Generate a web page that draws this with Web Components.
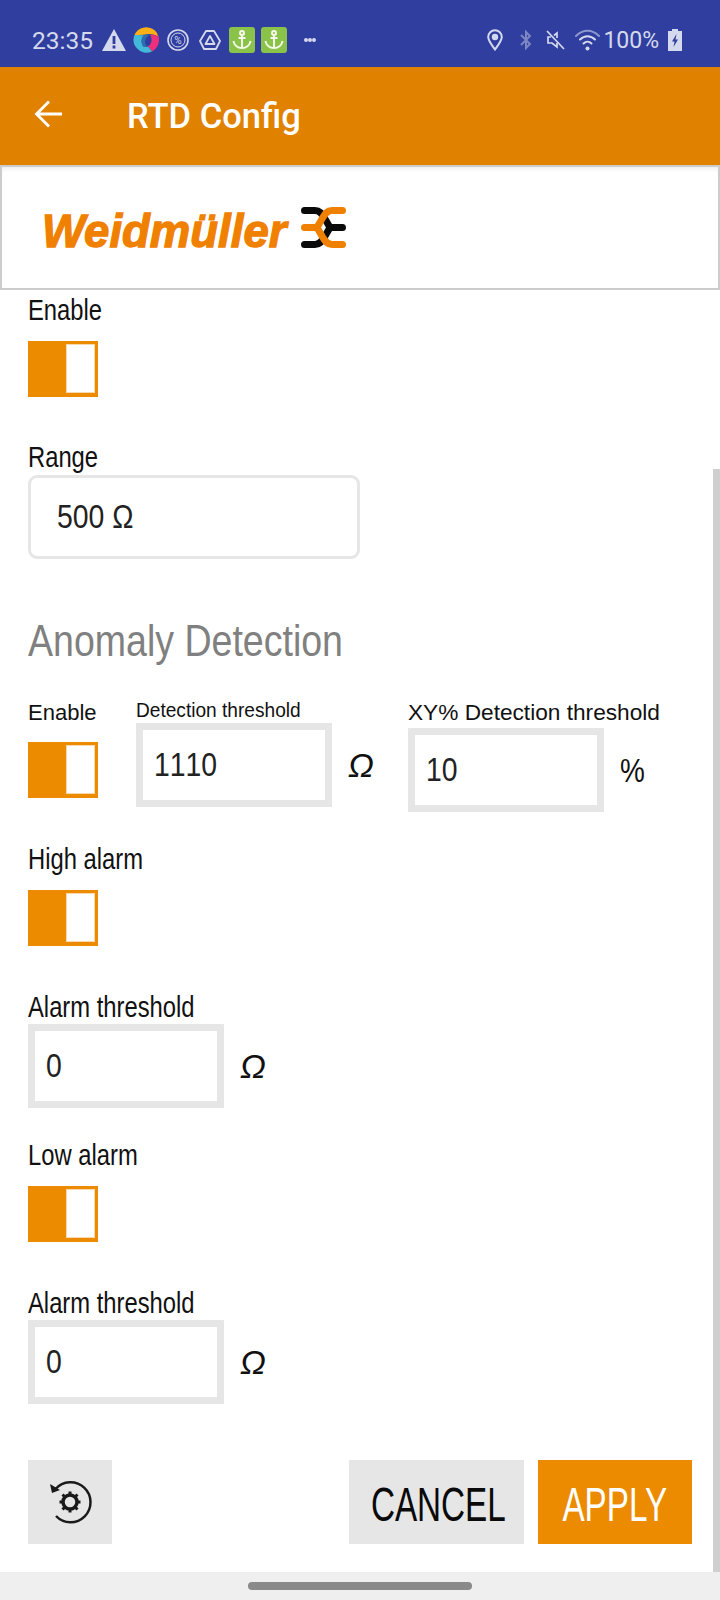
<!DOCTYPE html>
<html>
<head>
<meta charset="utf-8">
<title>RTD Config</title>
<style>
  html, body { margin: 0; padding: 0; background: #fff; }
  body { width: 720px; height: 1600px; overflow: hidden; font-family: "Liberation Sans", sans-serif; }
</style>
</head>
<body>
<rtd-screen></rtd-screen>
<script>
class StatusBar extends HTMLElement {
  connectedCallback() {
    this.attachShadow({ mode: 'open' }).innerHTML = `
<style>
  :host { display: flex; align-items: center; height: 67px; padding: 13px 38px 0 32px; box-sizing: border-box; background: #303f9f; color: #d5d9ed; font-family: Roboto, sans-serif; }
  .time { font-size: 24.5px; margin-right: 9px; }
  .pct { font-size: 23px; margin: 0 9px 0 3px; }
  svg { display: block; flex: none; }
  .grow { flex: 1; }
</style>
<span class="time">23:35</span>
<svg width="24" height="22" viewBox="0 0 24 22"><path d="M12 0 24 22H0Z" fill="#d5d9ed"/><path d="M10.600 7h2.800v8h-2.800zM10.600 16.500h2.800v3h-2.800z" fill="#303f9f"/></svg>
<svg style="margin-left:7px" width="26" height="26" viewBox="0 0 26 26">
  <path d="M2.500 6A13 13 0 0 1 24 6L25.500 10C21 7 17 6.500 13 7.500 9 8 5 8 1.500 8Z" fill="#fbb016"/>
  <path d="M24 6A13 13 0 0 1 19 24.500L15 19.500C19 17 19.500 12 17 7.500 20 7.500 22 8 25 10Z" fill="#ee2f7b"/>
  <path d="M1.500 8C5 8 8 8.500 11 8 8 11 7.500 17 11 20L15 19.500 19 24.500A13 13 0 0 1 1.500 8Z" fill="#42b9d8"/>
  <path d="M11 8C13 7.500 15 7.500 17 7.500 14 9 12 12 12 15 12 17 13 19 15 19.500L11 20C7.500 17 8 11 11 8Z" fill="#2c6fb0"/>
</svg>
<svg style="margin-left:8px" width="22" height="22" viewBox="0 0 22 22" fill="none" stroke="#d5d9ed"><circle cx="11" cy="11" r="10" stroke-width="1.600"/><circle cx="11" cy="11" r="7" stroke-width="1"/><text x="11" y="15" font-size="10" font-family="Roboto" text-anchor="middle" fill="#d5d9ed" stroke="none">%</text></svg>
<svg style="margin-left:10px" width="22" height="20" viewBox="0 0 22 20" fill="none" stroke="#d5d9ed" stroke-width="1.800" stroke-linejoin="round"><path d="M7 1H15L21 11 17 19H5L1 11Z"/><path d="M11 6 15.500 14H6.500Z"/></svg>
<anchor-icon style="margin-left:8px"></anchor-icon>
<anchor-icon style="margin-left:6px"></anchor-icon>
<svg style="margin-left:17px" width="12" height="6" viewBox="0 0 12 6" fill="#d5d9ed"><circle cx="2" cy="3" r="2"/><circle cx="6" cy="3" r="2"/><circle cx="10" cy="3" r="2"/></svg>
<span class="grow"></span>
<svg width="16" height="22" viewBox="0 0 16 22" fill="none" stroke="#d5d9ed" stroke-width="2"><path d="M8 20.500C4 15 1.200 11.500 1.200 8A6.800 6.800 0 0 1 14.800 8C14.800 11.500 12 15 8 20.500Z"/><circle cx="8" cy="8" r="2.200" fill="#d5d9ed"/></svg>
<svg style="margin-left:17px" width="12" height="20" viewBox="0 0 12 20" fill="none" stroke="#7c87c4" stroke-width="2"><path d="M1 5 10 14 6 18V2L10 6 1 15"/></svg>
<svg style="margin-left:14px" width="19" height="20" viewBox="0 0 19 20" fill="none" stroke="#d5d9ed" stroke-width="1.700"><path d="M1 1 18 19"/><path d="M5 7H2V13H6L11 17V13M11 8V3L8 5.500"/></svg>
<svg style="margin-left:10px" width="25" height="22" viewBox="0 0 25 22" fill="none" stroke-linecap="round"><path d="M1 7C8 0 17 0 24 7" stroke="#8d97cf" stroke-width="2"/><path d="M5 10.500C9.500 6 15.500 6 20 10.500" stroke="#d5d9ed" stroke-width="2"/><path d="M8.500 14.500C11 12 14 12 16.500 14.500" stroke="#d5d9ed" stroke-width="2"/><circle cx="12.500" cy="19.500" r="2" fill="#d5d9ed"/></svg>
<span class="pct">100%</span>
<svg width="14" height="22" viewBox="0 0 14 22"><path d="M4 0H10V2H14V22H0V2H4Z" fill="#d5d9ed"/><path d="M8.500 5 4 12.500H6.500L5.500 18 10 10.500H7.500Z" fill="#303f9f"/></svg>
`;
  }
}

class AnchorIcon extends HTMLElement {
  connectedCallback() {
    this.attachShadow({ mode: 'open' }).innerHTML = `
<style>
  :host { display: block; flex: none; width: 26px; height: 26px; border-radius: 3px; background: #8bc34a; }
  svg { display: block; }
</style>
<svg width="26" height="26" viewBox="0 0 26 26" fill="none" stroke="#f4f9ea" stroke-width="2"><circle cx="13" cy="6" r="2"/><path d="M13 8V21M9.500 11H16.500M4.500 14C5 18.500 9 21 13 21S21 18.500 21.500 14"/></svg>
`;
  }
}

class AppBar extends HTMLElement {
  connectedCallback() {
    this.attachShadow({ mode: 'open' }).innerHTML = `
<style>
  :host { display: flex; align-items: center; height: 98px; box-sizing: border-box; padding-left: 34px; background: #e18100; color: #fff; font-family: Roboto, sans-serif; }
  svg { display: block; margin: -4px 64px 0 0; }
  .title { font-size: 34.500px; font-weight: 500; }
</style>
<svg width="29" height="28" viewBox="0 0 29 28" fill="none" stroke="#fff" stroke-width="2.800"><path d="M28 14H2M15 1.500 2.500 14 15 26.500"/></svg>
<span class="title"><slot></slot></span>
`;
  }
}

class LogoPanel extends HTMLElement {
  connectedCallback() {
    this.attachShadow({ mode: 'open' }).innerHTML = `
<style>
  :host { display: flex; align-items: center; height: 125px; box-sizing: border-box; padding-left: 40px; border: 2px solid #cccccc; background: #fff; box-shadow: inset 0 5px 5px -3px #eeeeee; }
  .name { font-style: italic; font-weight: 700; font-size: 45.500px; color: #f08000; -webkit-text-stroke: 1.300px #f08000; line-height: 50px; margin-top: 8px; font-family: "Liberation Sans", sans-serif; }
  svg { display: block; margin-left: 15px; }
</style>
<span class="name">Weidmüller</span>
<svg width="45" height="41" viewBox="0 0 45 41" fill="none" stroke-width="7" stroke-linecap="round">
  <path d="M3.500 3.500H14C19 3.500 21 7 23.500 11L29 20.500H41.500" stroke="#0a0a0a"/>
  <path d="M3.500 37.500H14C19 37.500 21 34 23.500 30L29 20.500" stroke="#0a0a0a"/>
  <path d="M41.500 3.500H31C26 3.500 24 7 21.500 11L16 20.500H3.500" stroke="#f08000"/>
  <path d="M41.500 37.500H31C26 37.500 24 34 21.500 30L16 20.500" stroke="#f08000"/>
</svg>
`;
  }
}

// the reference font is a condensed grotesque, none is installed, so squeeze the text
class FieldLabel extends HTMLElement {
  connectedCallback() {
    const size = this.getAttribute('size') || '29';
    const squeeze = this.getAttribute('squeeze') || '.82';
    const line = this.getAttribute('line') || '34';
    this.attachShadow({ mode: 'open' }).innerHTML = `
<style>
  :host { display: block; font-size: ${size}px; line-height: ${line}px; color: #111; white-space: nowrap; transform: scaleX(${squeeze}); transform-origin: 0 50%; font-family: "Liberation Sans", sans-serif; }
</style>
<slot></slot>
`;
  }
}

class ToggleBox extends HTMLElement {
  connectedCallback() {
    this.attachShadow({ mode: 'open' }).innerHTML = `
<style>
  :host { display: flex; justify-content: flex-end; width: 70px; height: 56px; box-sizing: border-box; padding: 3px 3px 4px 0; background: #ec8b00; }
  .knob { width: 29px; background: #fff; box-shadow: inset 0 0 0 1px #f8d8ad; }
</style>
<div class="knob"></div>
`;
  }
}

class ValueBox extends HTMLElement {
  connectedCallback() {
    const rounded = this.hasAttribute('rounded');
    this.attachShadow({ mode: 'open' }).innerHTML = `
<style>
  :host { display: flex; align-items: center; height: 84px; width: 196px; box-sizing: border-box; border: ${rounded ? '3px' : '7px'} solid #e6e6e6; border-radius: ${rounded ? '9px' : '0'}; padding-left: ${rounded ? '26px' : '11px'}; background: #fff; color: #222; font-family: "Liberation Sans", sans-serif; font-size: 33px; font-kerning: none; }
  .txt { transform: scaleX(.86); transform-origin: 0 50%; white-space: nowrap; }
</style>
<span class="txt"><slot></slot></span>
`;
  }
}

class UnitMark extends HTMLElement {
  connectedCallback() {
    this.attachShadow({ mode: 'open' }).innerHTML = `
<style>
  :host { display: block; width: 30px; font-family: "Liberation Sans", sans-serif; font-size: 34px; color: #111; }
</style>
<slot></slot>
`;
  }
}

class ActionBtn extends HTMLElement {
  connectedCallback() {
    const primary = this.hasAttribute('primary');
    this.attachShadow({ mode: 'open' }).innerHTML = `
<style>
  :host { display: flex; align-items: center; justify-content: center; height: 84px; background: ${primary ? '#ec8b00' : '#e6e6e6'}; color: ${primary ? '#fff' : '#0a0a0a'}; font-family: "Liberation Sans", sans-serif; font-size: 47.500px; }
  .txt { display: block; padding-top: 5px; transform: scaleX(.7); }
  :host([icon]) .txt { padding: 0; transform: none; }
</style>
<span class="txt"><slot></slot></span>
`;
  }
}

class RtdScreen extends HTMLElement {
  connectedCallback() {
    this.attachShadow({ mode: 'open' }).innerHTML = `
<style>
  :host { display: block; position: relative; width: 720px; height: 1600px; overflow: hidden; background: #fff; }
  main { display: flex; flex-direction: column; align-items: flex-start; padding: 3px 0 0 28px; height: 1282px; box-sizing: border-box; }
  .heading { font-family: "Liberation Sans", sans-serif; font-size: 45px; line-height: 54px; color: #808080; margin-top: 55px; transform: scaleX(.834); transform-origin: 0 50%; white-space: nowrap; }
  .gap14 { margin-top: 14px; }
  .gap43 { margin-top: 43px; }
  .gap1 { margin-top: 1px; }
  .gap30 { margin-top: 30px; }
  .gap44 { margin-top: 44px; }
  .wide { width: 332px; }
  .anomaly { display: flex; align-items: flex-start; margin-top: 29px; height: 115px; }
  .col { display: flex; flex-direction: column; }
  .withunit { display: flex; align-items: center; }
  .withunit unit-mark { margin-left: 16px; }
  .pct { display: inline-block; transform: scaleX(.82); transform-origin: 0 50%; }
  .col1 { width: 108px; padding-top: 3px; }
  .col1 toggle-box { margin-top: 16px; }
  .col2 { width: 272px; }
  .col3 { padding-top: 3px; }
  .col3 .withunit { margin-top: 2px; }
  .actions { display: flex; width: 664px; margin-top: 56px; }
  .reset { width: 84px; }
  .reset svg { display: block; }
  .cancel { width: 175px; margin-left: auto; padding-left: 3px; box-sizing: border-box; }
  .apply { width: 154px; margin-left: 14px; }
  .scroll { position: absolute; right: 0; top: 469px; bottom: 28px; width: 7px; background: #cfcfcf; }
  footer { display: flex; align-items: center; justify-content: center; height: 28px; background: #efefef; }
  .pill { width: 224px; height: 8px; border-radius: 4px; background: #8a8a8a; }
</style>
<status-bar></status-bar>
<app-bar>RTD Config</app-bar>
<logo-panel></logo-panel>
<main>
  <field-label>Enable</field-label>
  <toggle-box class="gap14"></toggle-box>
  <field-label class="gap43">Range</field-label>
  <value-box class="gap1 wide" rounded>500 Ω</value-box>
  <div class="heading">Anomaly Detection</div>
  <div class="anomaly">
    <div class="col col1">
      <field-label size="22" line="26" squeeze="1">Enable</field-label>
      <toggle-box></toggle-box>
    </div>
    <div class="col col2">
      <field-label size="21" line="26" squeeze=".91">Detection threshold</field-label>
      <div class="withunit"><value-box>1110</value-box><unit-mark><i>Ω</i></unit-mark></div>
    </div>
    <div class="col col3">
      <field-label size="22" line="26" squeeze="1.03">XY% Detection threshold</field-label>
      <div class="withunit"><value-box>10</value-box><unit-mark><span class="pct">%</span></unit-mark></div>
    </div>
  </div>
  <field-label class="gap30">High alarm</field-label>
  <toggle-box class="gap14"></toggle-box>
  <field-label class="gap44">Alarm threshold</field-label>
  <div class="withunit"><value-box>0</value-box><unit-mark><i>Ω</i></unit-mark></div>
  <field-label class="gap30">Low alarm</field-label>
  <toggle-box class="gap14"></toggle-box>
  <field-label class="gap44">Alarm threshold</field-label>
  <div class="withunit"><value-box>0</value-box><unit-mark><i>Ω</i></unit-mark></div>
  <div class="actions">
    <action-btn class="reset" icon>
      <svg width="46" height="46" viewBox="0 0 46 46" fill="none" stroke="#1a1a1a" stroke-width="2.500">
        <path d="M8.500 10A20 20 0 1 1 9 37"/>
        <path d="M3 5 5 14 13 11Z" fill="#1a1a1a" stroke="none"/>
        <circle cx="23" cy="23" r="7" stroke-width="3.500"/>
        <path d="M23 12.500V16M23 30V33.500M12.500 23H16M30 23H33.500M15.500 15.500 18 18M28 28 30.500 30.500M15.500 30.500 18 28M28 18 30.500 15.500" stroke-width="3"/>
      </svg>
    </action-btn>
    <action-btn class="cancel">CANCEL</action-btn>
    <action-btn class="apply" primary>APPLY</action-btn>
  </div>
</main>
<footer><div class="pill"></div></footer>
<div class="scroll"></div>
`;
  }
}

customElements.define('anchor-icon', AnchorIcon);
customElements.define('status-bar', StatusBar);
customElements.define('app-bar', AppBar);
customElements.define('logo-panel', LogoPanel);
customElements.define('field-label', FieldLabel);
customElements.define('toggle-box', ToggleBox);
customElements.define('value-box', ValueBox);
customElements.define('unit-mark', UnitMark);
customElements.define('action-btn', ActionBtn);
customElements.define('rtd-screen', RtdScreen);
</script>
</body>
</html>
